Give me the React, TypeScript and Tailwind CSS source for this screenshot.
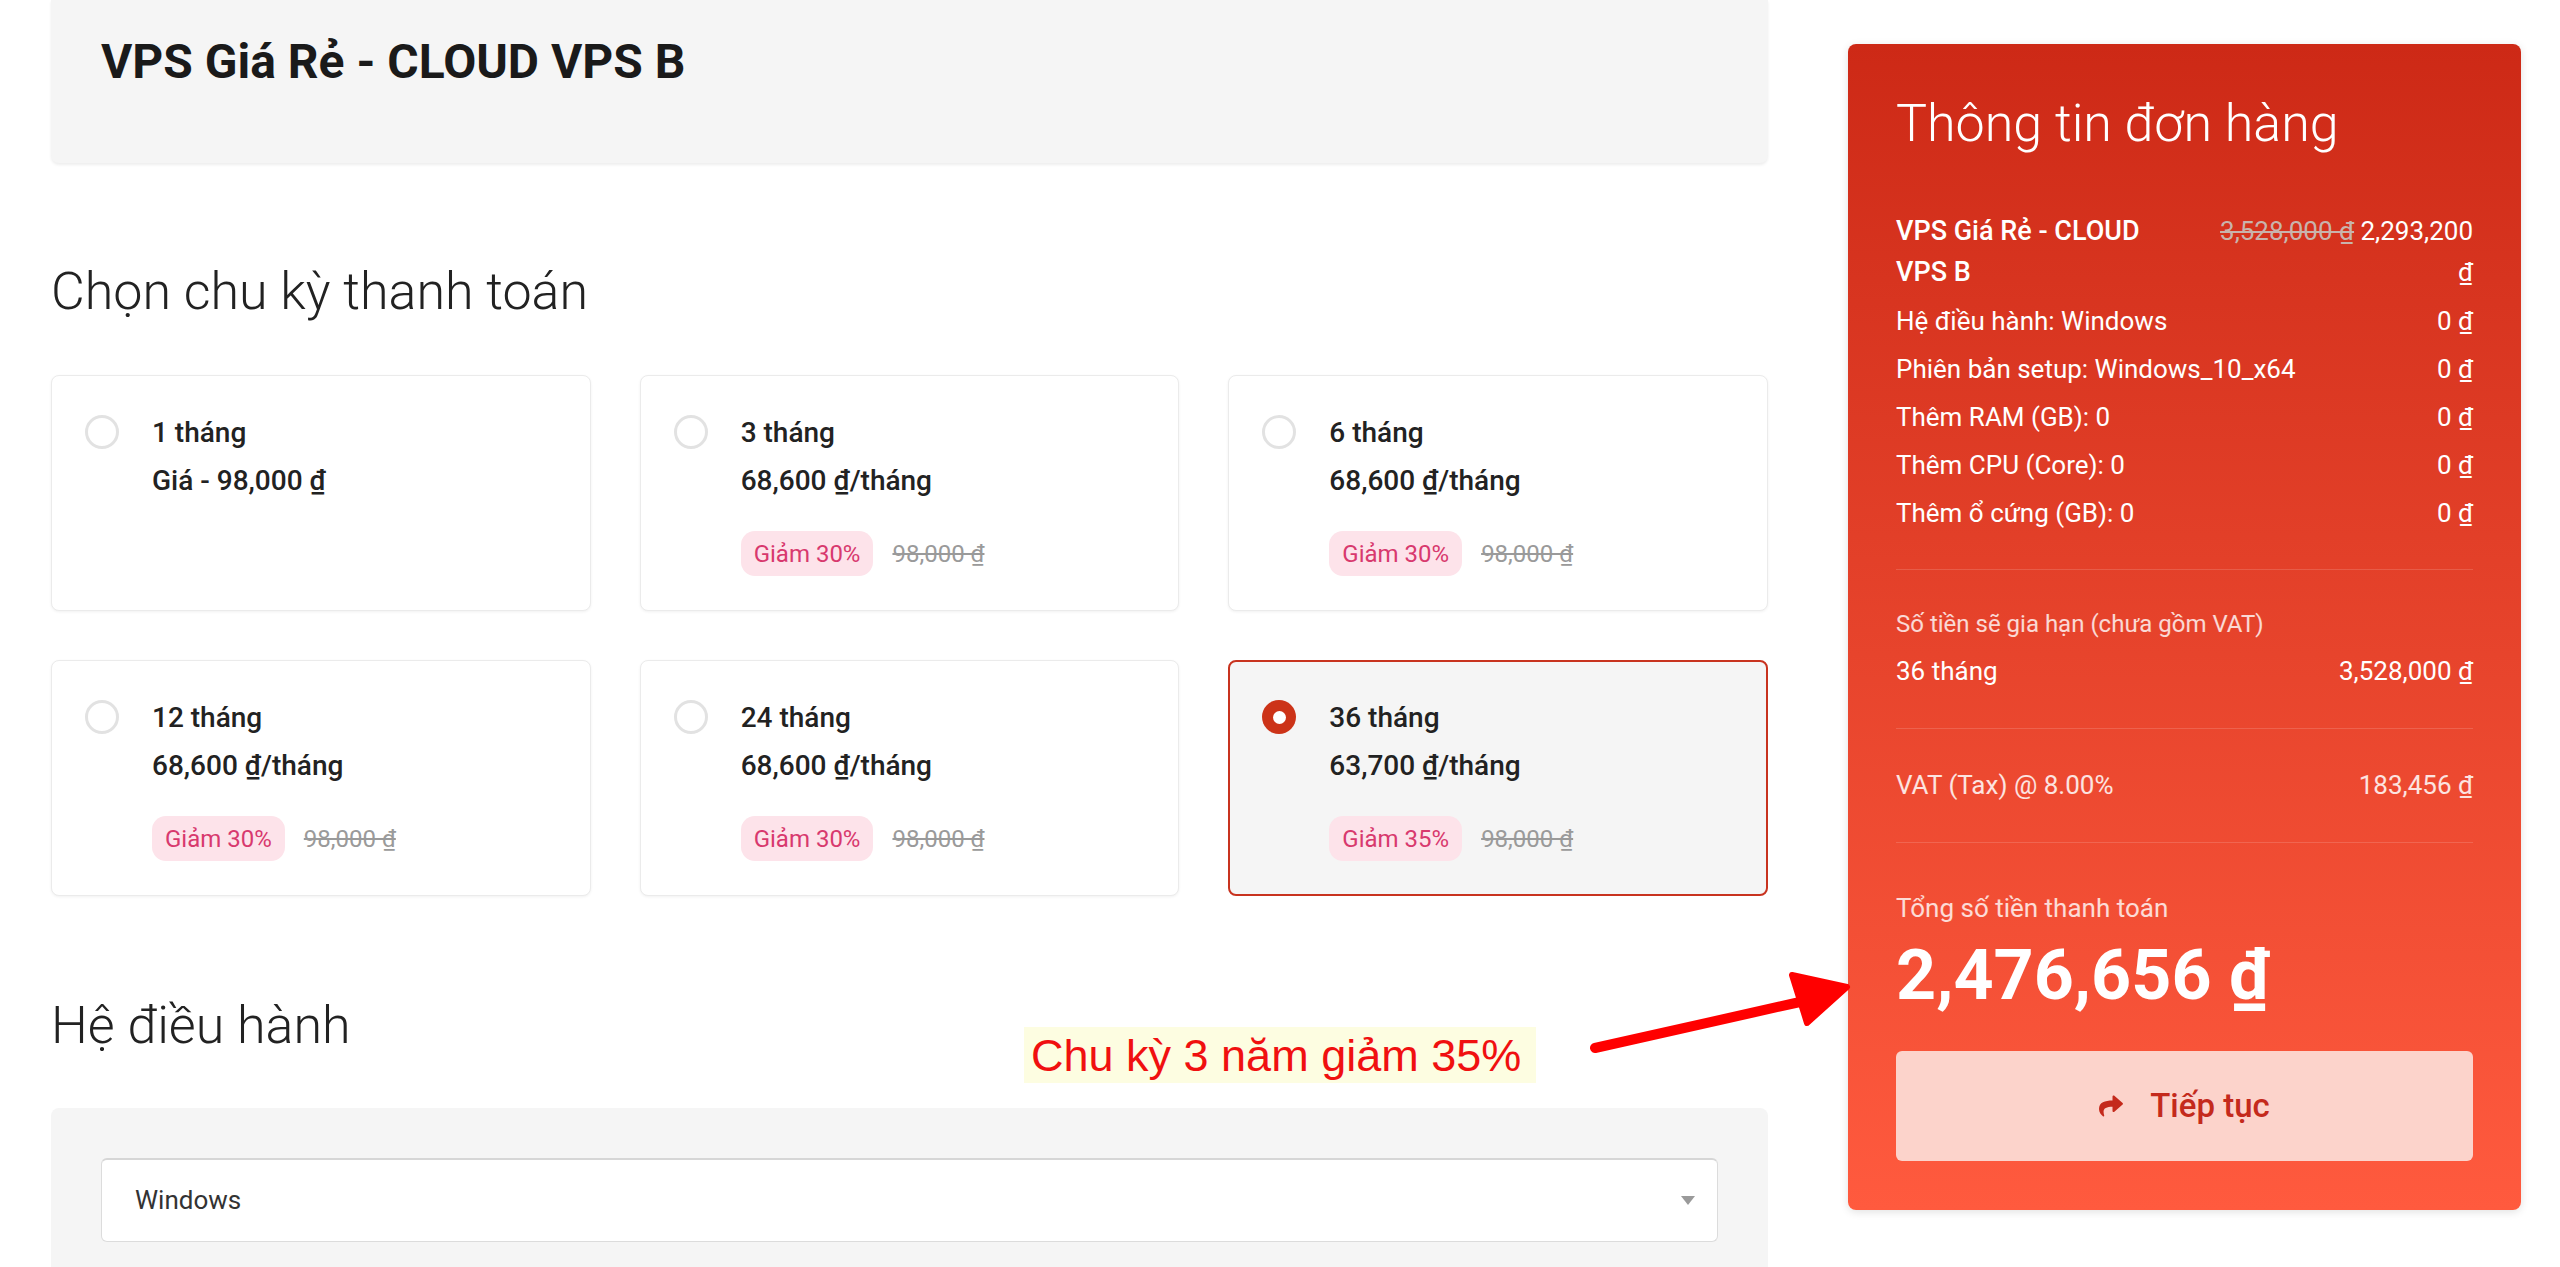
import { FaShare } from "react-icons/fa";

type Plan = {
  label: string;
  price: string;
  discount?: string;
  selected?: boolean;
};

const plans: Plan[] = [
  { label: "1 tháng", price: "Giá - 98,000 ₫" },
  { label: "3 tháng", price: "68,600 ₫/tháng", discount: "Giảm 30%" },
  { label: "6 tháng", price: "68,600 ₫/tháng", discount: "Giảm 30%" },
  { label: "12 tháng", price: "68,600 ₫/tháng", discount: "Giảm 30%" },
  { label: "24 tháng", price: "68,600 ₫/tháng", discount: "Giảm 30%" },
  { label: "36 tháng", price: "63,700 ₫/tháng", discount: "Giảm 35%", selected: true },
];

const extras = [
  "Hệ điều hành: Windows",
  "Phiên bản setup: Windows_10_x64",
  "Thêm RAM (GB): 0",
  "Thêm CPU (Core): 0",
  "Thêm ổ cứng (GB): 0",
];

const PlanCard = ({ plan }: { plan: Plan }) => (
  <div
    className={
      plan.selected
        ? "h-[236px] rounded-[8px] border-2 border-[#c8331f] bg-[#f5f5f5] pl-[32px] pt-[36px] flex"
        : "h-[236px] rounded-[8px] border border-[#ebebeb] bg-white shadow-[0_1px_3px_rgba(0,0,0,0.06)] pl-[33px] pt-[37px] flex"
    }
  >
    {plan.selected ? (
      <div className="mt-[2px] w-[34px] h-[34px] rounded-full bg-[#cc3318] flex items-center justify-center shrink-0">
        <div className="w-[13px] h-[13px] rounded-full bg-white" />
      </div>
    ) : (
      <div className="mt-[2px] w-[34px] h-[34px] rounded-full border-[3px] border-[#e2e2e2] shrink-0" />
    )}
    <div className="ml-[33px] flex flex-col">
      <div className="text-[28px] leading-[40px] font-medium text-[#222]">{plan.label}</div>
      <div className="mt-[8px] text-[28px] leading-[40px] font-medium text-[#222]">{plan.price}</div>
      {plan.discount && (
        <div className="mt-[30px] flex items-center">
          <span className="h-[45px] px-[13px] rounded-[14px] bg-[#fde3ea] text-[#d8396e] text-[24px] flex items-center">
            {plan.discount}
          </span>
          <span className="ml-[19px] text-[24px] text-[#9a9a9a] line-through">98,000 ₫</span>
        </div>
      )}
    </div>
  </div>
);

export default function App() {
  return (
    <div className="relative w-[2560px] h-[1267px] overflow-hidden bg-white font-[Roboto,'Noto_Sans',sans-serif]">
      <div className="flex items-start">
        <div className="ml-[51px] w-[1717px] flex flex-col">
          <div className="h-[163px] rounded-b-[8px] bg-[#f5f5f5] shadow-[0_2px_3px_rgba(0,0,0,0.07)] pl-[50px] pt-[34px]">
            <div className="text-[48px] leading-[56px] font-bold text-[#1a1a1a]">VPS Giá Rẻ - CLOUD VPS B</div>
          </div>

          <div className="mt-[98px] text-[52px] leading-[62px] font-light text-[#222]">Chọn chu kỳ thanh toán</div>

          <div className="mt-[52px] grid grid-cols-3 gap-[49px]">
            {plans.map((p) => (
              <PlanCard key={p.label} plan={p} />
            ))}
          </div>

          <div className="mt-[99px] text-[52px] leading-[62px] font-light text-[#222]">Hệ điều hành</div>

          <div className="mt-[51px] h-[220px] rounded-t-[8px] bg-[#f5f5f5] px-[50px] pt-[50px]">
            <div className="h-[84px] rounded-[6px] bg-white border border-[#dcdcdc] border-t-2 border-t-[#d6d6d6] flex items-center justify-between pl-[33px] pr-[22px]">
              <span className="text-[26px] text-[#333]">Windows</span>
              <svg width="14" height="9" viewBox="0 0 14 9">
                <path d="M0 0 H14 L7 9 Z" fill="#9a9a9a" />
              </svg>
            </div>
          </div>
        </div>

        <div className="ml-[80px] mt-[44px] w-[673px] rounded-[8px] bg-linear-to-b from-[#cd2916] to-[#ff5a3e] shadow-[0_2px_8px_rgba(0,0,0,0.12)] px-[48px] pt-[49px] pb-[49px] text-white">
          <div className="text-[52px] leading-[62px] font-light">Thông tin đơn hàng</div>

          <div className="mt-[56px] flex justify-between text-[26px] leading-[41px]">
            <div className="font-medium text-[27px]">
              VPS Giá Rẻ - CLOUD
              <br />
              VPS B
            </div>
            <div className="text-right">
              <div>
                <span className="text-[#c9b3ac] line-through">3,528,000 ₫</span> 2,293,200
              </div>
              <div>₫</div>
            </div>
          </div>

          <div className="mt-[4px] flex flex-col text-[26px] leading-[48px]">
            {extras.map((e) => (
              <div key={e} className="flex justify-between">
                <span>{e}</span>
                <span>0 ₫</span>
              </div>
            ))}
          </div>

          <div className="mt-[32px] border-t border-white/15" />

          <div className="mt-[34px] text-[24px] leading-[40px] text-white/80">Số tiền sẽ gia hạn (chưa gồm VAT)</div>
          <div className="mt-[3px] flex justify-between text-[26px] leading-[48px]">
            <span>36 tháng</span>
            <span>3,528,000 ₫</span>
          </div>

          <div className="mt-[33px] border-t border-white/15" />

          <div className="mt-[32px] flex justify-between text-[26px] leading-[48px] text-white/85">
            <span>VAT (Tax) @ 8.00%</span>
            <span>183,456 ₫</span>
          </div>

          <div className="mt-[33px] border-t border-white/15" />

          <div className="mt-[45px] text-[26px] leading-[40px] text-white/80">Tổng số tiền thanh toán</div>
          <div className="mt-[9px] text-[70px] leading-[76px] font-bold">2,476,656 ₫</div>

          <button className="mt-[38px] w-full h-[110px] rounded-[6px] bg-[#fcd3cb] text-[#c42a1c] flex items-center justify-center gap-[27px]">
            <FaShare className="w-[24px] h-[24px]" />
            <span className="text-[33px] font-medium">Tiếp tục</span>
          </button>
        </div>
      </div>

      <div className="absolute left-[1024px] top-[1027px] w-[512px] h-[56px] bg-[#fdfde1] flex items-center pl-[7px]">
        <span className="font-['Liberation_Sans',Arial,sans-serif] text-[45px] leading-none text-[#f01010]">
          Chu kỳ 3 năm giảm 35%
        </span>
      </div>

      <svg className="absolute left-[1580px] top-[960px]" width="280" height="100" viewBox="0 0 280 100">
        <line x1="15" y1="88" x2="220" y2="42" stroke="#ff0000" strokeWidth="10" strokeLinecap="round" />
        <polygon
          points="267,27 212,15 227,63"
          fill="#ff0000"
          stroke="#ff0000"
          strokeWidth="6"
          strokeLinejoin="round"
        />
      </svg>
    </div>
  );
}
